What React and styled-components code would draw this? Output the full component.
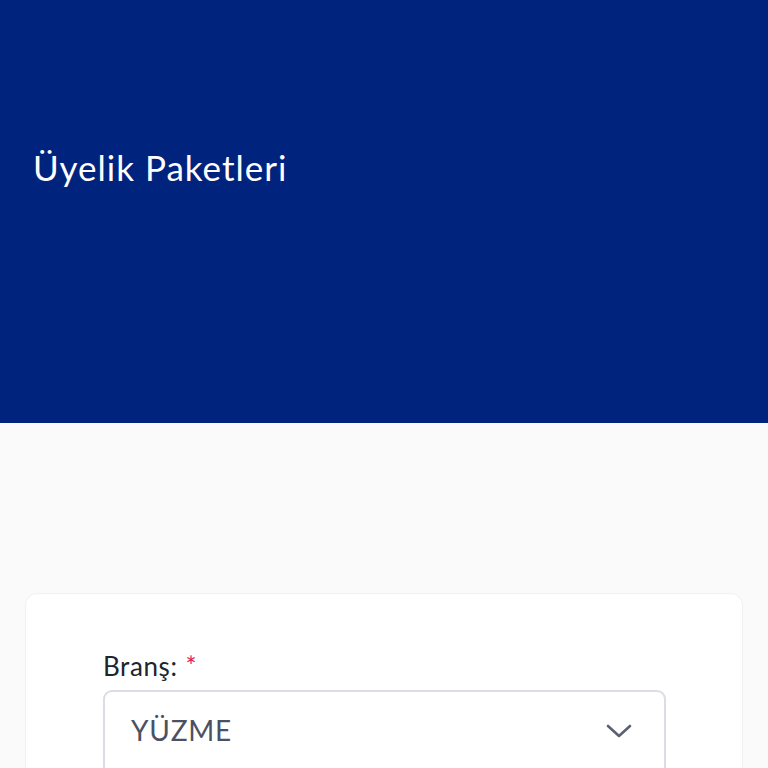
import React from "react";
import styled, { createGlobalStyle } from "styled-components";

const GlobalStyle = createGlobalStyle`
  html, body {
    margin: 0;
    padding: 0;
    background: #fafafa;
    font-family: Lato, "Noto Sans", sans-serif;
  }
`;

const Page = styled.div`
  width: 768px;
  height: 768px;
  overflow: hidden;
  background: #fafafa;
`;

const Hero = styled.header`
  height: 423px;
  background: #00247d;
  display: flex;
  align-items: flex-start;
  padding: 0 33px;
  box-sizing: border-box;
`;

const Title = styled.h1`
  margin: 146px 0 0;
  color: #ffffff;
  font-size: 35px;
  font-weight: 400;
  letter-spacing: 1px;
`;

const Content = styled.main`
  padding: 170px 25px 0 25px;
`;

const Card = styled.section`
  background: #ffffff;
  border: 1px solid #f0f0f2;
  border-radius: 12px;
  padding: 56px 76px 0 77px;
  min-height: 300px;
`;

const Label = styled.label`
  display: block;
  font-size: 26px;
  color: #222428;
  letter-spacing: 0.6px;
  margin-bottom: 8px;
`;

const Required = styled.span`
  color: #e0245e;
  margin-left: 8px;
`;

const Select = styled.div`
  height: 86px;
  border: 2px solid #dcdde3;
  border-radius: 9px;
  display: flex;
  align-items: center;
  justify-content: space-between;
  padding: 0 32px 0 26px;
  box-sizing: border-box;
`;

const Value = styled.span`
  font-size: 28px;
  color: #4b5163;
  letter-spacing: 0.8px;
  margin-top: -6px;
`;

const Chevron = () => (
  <svg width="26" height="16" viewBox="0 0 26 16" fill="none" style={{ marginTop: -4 }}>
    <path d="M2 3 L13 13 L24 3" stroke="#5b6170" strokeWidth="2.6" strokeLinecap="round" strokeLinejoin="round" />
  </svg>
);

export default function App() {
  return (
    <Page>
      <GlobalStyle />
      <Hero>
        <Title>Üyelik Paketleri</Title>
      </Hero>
      <Content>
        <Card>
          <Label>
            Branş:<Required>*</Required>
          </Label>
          <Select>
            <Value>YÜZME</Value>
            <Chevron />
          </Select>
        </Card>
      </Content>
    </Page>
  );
}
